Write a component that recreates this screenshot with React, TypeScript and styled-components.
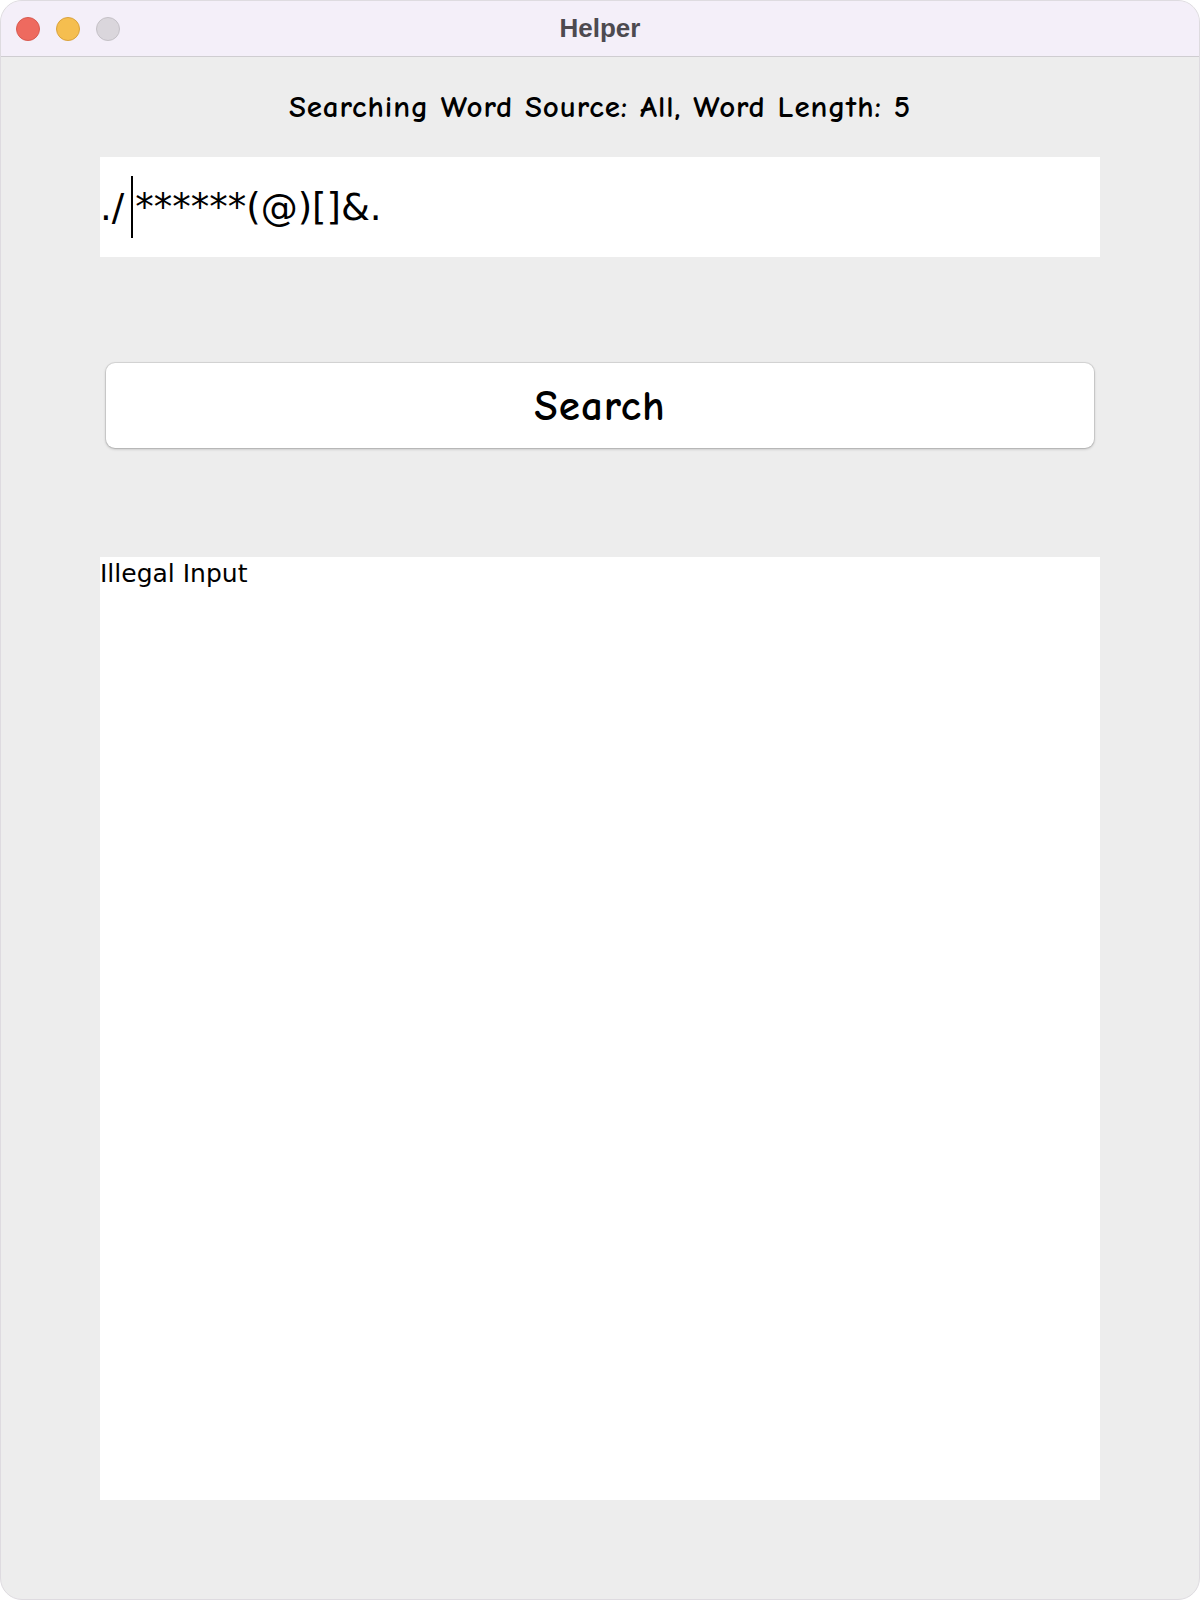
import React from "react";
import styled, { createGlobalStyle } from "styled-components";

const Global = createGlobalStyle`
  html, body { margin: 0; padding: 0; background: #ffffff; }
  body { font-family: "DejaVu Sans", sans-serif; }
`;

const Window = styled.div`
  width: 1200px;
  height: 1600px;
  box-sizing: border-box;
  background: #ededed;
  border-radius: 22px;
  overflow: hidden;
  display: flex;
  flex-direction: column;
  border: 1px solid #dedbe0;
`;

const TitleBar = styled.div`
  height: 56px;
  flex: none;
  box-sizing: border-box;
  background: #f4eff9;
  border-bottom: 1px solid #cfcdd1;
  display: flex;
  align-items: center;
  position: relative;
  padding-left: 15px;
  gap: 16px;
`;

const Light = styled.span<{ $fill: string; $stroke: string }>`
  width: 24px;
  height: 24px;
  border-radius: 50%;
  box-sizing: border-box;
  background: ${(p) => p.$fill};
  border: 1px solid ${(p) => p.$stroke};
`;

const Title = styled.div`
  position: absolute;
  left: 0;
  right: 0;
  top: 0;
  bottom: 0;
  display: flex;
  align-items: center;
  justify-content: center;
  font-family: "Liberation Sans", Arial, sans-serif;
  font-weight: 700;
  font-size: 26px;
  color: #4d4a50;
  pointer-events: none;
`;

const Content = styled.div`
  flex: 1;
  display: flex;
  flex-direction: column;
  padding: 0 99px 99px 99px;
`;

const Label = styled.div`
  font-family: "Comic Sans MS", "Comic Neue", "DejaVu Sans", sans-serif;
  font-weight: 700;
  font-size: 31px;
  letter-spacing: 0.9px;
  color: #000;
  text-align: center;
  height: 100px;
  line-height: 100px;
`;

const InputBox = styled.div`
  height: 100px;
  background: #ffffff;
  display: flex;
  align-items: center;
  font-family: "DejaVu Sans", sans-serif;
  font-size: 37px;
  color: #000;
  white-space: pre;
`;

const Caret = styled.span`
  display: inline-block;
  width: 2px;
  height: 62px;
  background: #000;
  margin: 0 2px 0 7px;
`;

const ButtonRow = styled.div`
  padding: 106px 6px 0 6px;
`;

const SearchButton = styled.button`
  width: 100%;
  height: 85px;
  background: #ffffff;
  border: none;
  border-radius: 9px;
  box-shadow: 0 0 0 1px rgba(0, 0, 0, 0.08), 0 1px 3px rgba(0, 0, 0, 0.25);
  font-family: "Comic Sans MS", "Comic Neue", "DejaVu Sans", sans-serif;
  font-weight: 700;
  font-size: 43px;
  letter-spacing: 1px;
  color: #000;
  cursor: pointer;
`;

const Output = styled.div`
  margin-top: 109px;
  flex: 1;
  background: #ffffff;
  font-family: "DejaVu Sans", sans-serif;
  font-size: 25px;
  line-height: 34px;
  color: #000;
`;

export default function App() {
  return (
    <>
      <Global />
      <Window>
        <TitleBar>
          <Light $fill="#ee6a5f" $stroke="#d85a50" />
          <Light $fill="#f5be4f" $stroke="#d9a23c" />
          <Light $fill="#dad6dc" $stroke="#c4c0c6" />
          <Title>Helper</Title>
        </TitleBar>
        <Content>
          <Label>Searching Word Source: All, Word Length: 5</Label>
          <InputBox>
            {"./"}
            <Caret />
            {"******(@)[]&."}
          </InputBox>
          <ButtonRow>
            <SearchButton>Search</SearchButton>
          </ButtonRow>
          <Output>Illegal Input</Output>
        </Content>
      </Window>
    </>
  );
}
